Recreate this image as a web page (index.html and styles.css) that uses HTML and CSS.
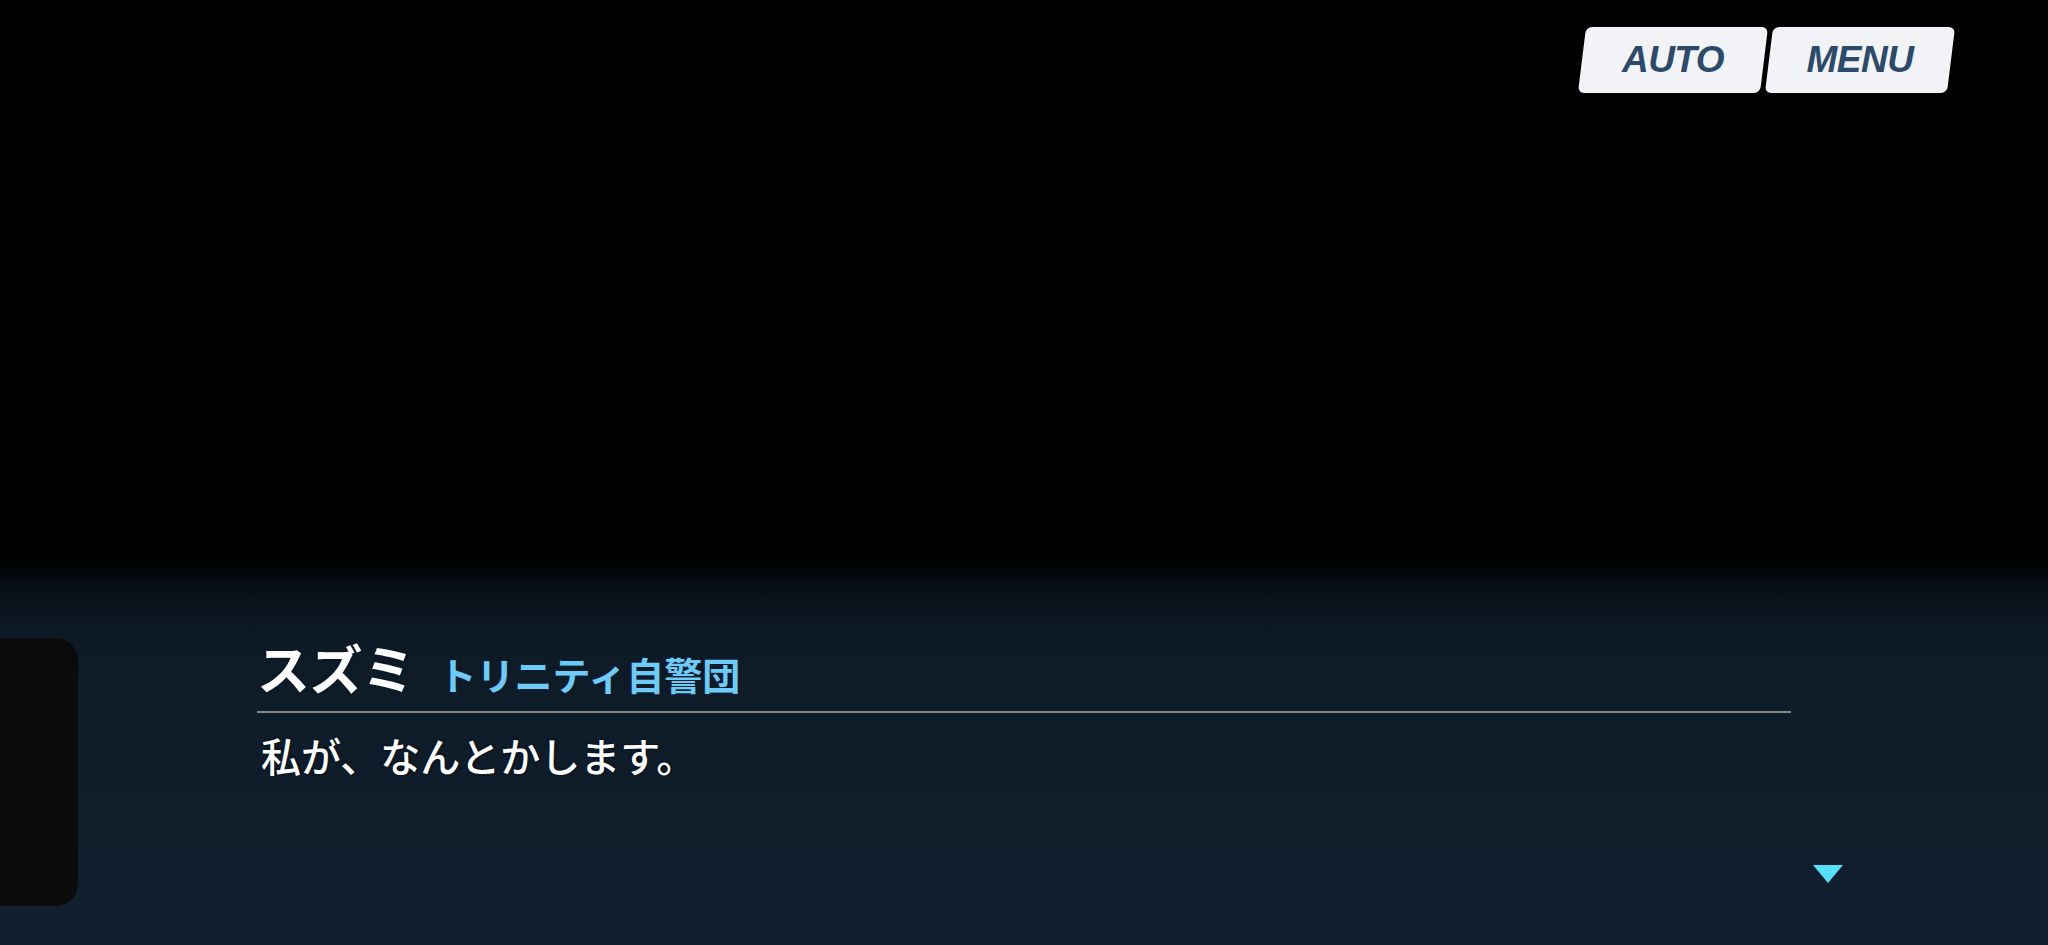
FILE: index.html
```html
<!DOCTYPE html>
<html lang="ja">
<head>
  <meta charset="UTF-8">
  <meta name="viewport" content="width=device-width, initial-scale=1.0">
  <title>スズミ - ストーリー</title>
  <link rel="stylesheet" href="styles.css">
</head>
<body>
  <div class="stage">
    <div class="topbar">
      <button class="btn"><span>AUTO</span></button>
      <button class="btn"><span>MENU</span></button>
    </div>

    <div class="dialog">
      <div class="side-panel"></div>
      <div class="textbox">
        <div class="speaker">
          <span class="name">スズミ</span>
          <span class="group">トリニティ自警団</span>
        </div>
        <div class="rule"></div>
        <p class="line">私が、なんとかします。</p>
        <div class="next"></div>
      </div>
    </div>
  </div>
</body>
</html>
```

FILE: styles.css
```css
html, body {
  margin: 0;
  padding: 0;
}
body {
  background-color: #000;
  font-family: "Noto Sans CJK JP", "Noto Sans", sans-serif;
  color: #fff;
}
.stage {
  height: 945px;
  display: flex;
  flex-direction: column;
  background: linear-gradient(180deg, #000 0, #000 555px, #0a141d 600px, #0e1b27 650px, #11202f 945px);
  overflow: hidden;
}
.topbar {
  display: flex;
  justify-content: flex-end;
  gap: 5px;
  padding: 27px 97px 0 0;
}
.btn {
  width: 182px;
  height: 66px;
  border: none;
  border-radius: 6px;
  background-color: #f1f3f6;
  transform: skewX(-7deg);
  padding: 0;
  box-shadow: 0 2px 4px rgba(0,0,0,0.4);
}
.btn span {
  display: block;
  transform: skewX(7deg);
  font-family: "Liberation Sans", Arial, sans-serif;
  font-style: italic;
  font-weight: 700;
  font-size: 37px;
  color: #2d4a6b;
  letter-spacing: -0.5px;
}
.dialog {
  margin-top: auto;
  display: flex;
  align-items: flex-start;
  padding-bottom: 39px;
}
.side-panel {
  width: 78px;
  height: 268px;
  background-color: #0b0b0b;
  border-radius: 0 22px 22px 0;
  flex-shrink: 0;
}
.textbox {
  position: relative;
  margin-left: 179px;
  width: 1534px;
  padding-top: 0;
}
.speaker {
  display: flex;
  align-items: baseline;
  height: 58px;
  white-space: nowrap;
}
.name {
  font-size: 53px;
  font-weight: 700;
  line-height: 58px;
  letter-spacing: -0.5px;
  text-shadow: 0 0 3px #0a1a2c, 0 0 2px #0a1a2c;
}
.group {
  margin-left: 24px;
  font-size: 38px;
  font-weight: 700;
  color: #6ecaf6;
  text-shadow: 0 0 3px #0b2036;
}
.rule {
  margin-top: 15px;
  height: 2px;
  background-color: #7f8488;
}
.line {
  margin: 17px 0 0 4px;
  font-size: 40px;
  font-weight: 500;
  line-height: 50px;
  text-shadow: 0 0 3px #06111c, 0 0 2px #06111c;
}
.next {
  position: absolute;
  left: 1556px;
  top: 227px;
  width: 0;
  height: 0;
  border-left: 15px solid transparent;
  border-right: 15px solid transparent;
  border-top: 18px solid #55dff8;
}
```
